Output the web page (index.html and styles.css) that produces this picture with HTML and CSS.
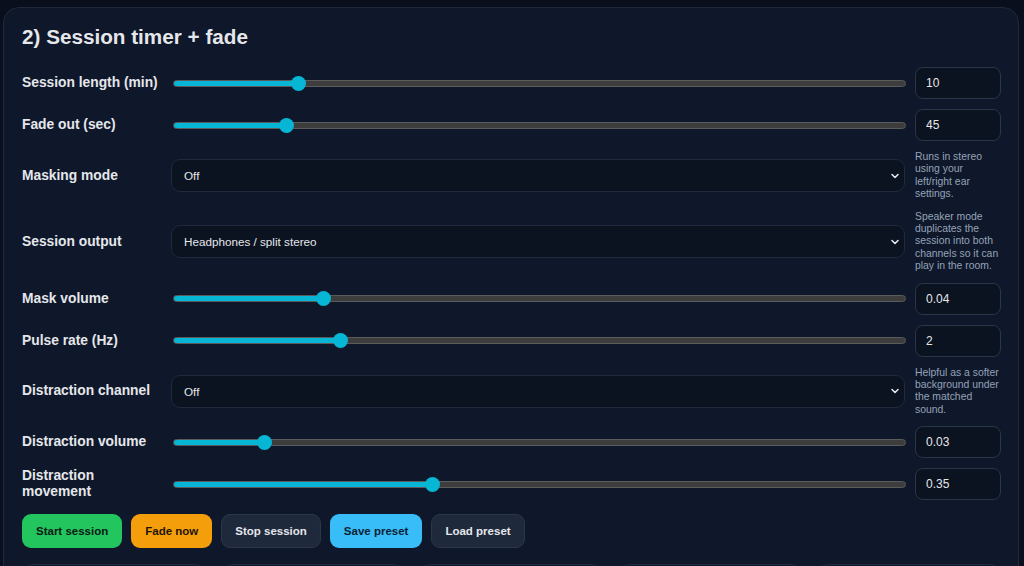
FILE: index.html
```html
<!DOCTYPE html>
<html lang="en">
<head>
<meta charset="utf-8">
<title>Session timer + fade</title>
<link rel="stylesheet" href="styles.css">
</head>
<body>
<div class="page">
  <section class="card">
    <h2 class="card-title">2) Session timer + fade</h2>
    <div class="form-grid">
      <label class="field-label">Session length (min)</label>
      <input class="slider" type="range" min="1" max="56" step="1" value="10" style="--f:0.1636">
      <input class="num" type="text" value="10">

      <label class="field-label">Fade out (sec)</label>
      <input class="slider" type="range" min="1" max="300" step="1" value="45" style="--f:0.1472">
      <input class="num" type="text" value="45">

      <label class="field-label">Masking mode</label>
      <select class="select"><option>Off</option></select>
      <p class="help">Runs in stereo using your left/right ear settings.</p>

      <label class="field-label">Session output</label>
      <select class="select"><option>Headphones / split stereo</option></select>
      <p class="help">Speaker mode duplicates the session into both channels so it can play in the room.</p>

      <label class="field-label">Mask volume</label>
      <input class="slider" type="range" min="0" max="0.202" step="0.001" value="0.04" style="--f:0.198">
      <input class="num" type="text" value="0.04">

      <label class="field-label">Pulse rate (Hz)</label>
      <input class="slider" type="range" min="0" max="9" step="0.1" value="2" style="--f:0.2222">
      <input class="num" type="text" value="2">

      <label class="field-label">Distraction channel</label>
      <select class="select"><option>Off</option></select>
      <p class="help">Helpful as a softer background under the matched sound.</p>

      <label class="field-label">Distraction volume</label>
      <input class="slider" type="range" min="0" max="0.26" step="0.01" value="0.03" style="--f:0.1154">
      <input class="num" type="text" value="0.03">

      <label class="field-label">Distraction movement</label>
      <input class="slider" type="range" min="0" max="1" step="0.01" value="0.35" style="--f:0.35">
      <input class="num" type="text" value="0.35">
    </div>

    <div class="actions">
      <button class="btn btn-green">Start session</button>
      <button class="btn btn-amber">Fade now</button>
      <button class="btn btn-dark">Stop session</button>
      <button class="btn btn-sky">Save preset</button>
      <button class="btn btn-dark">Load preset</button>
    </div>

    <div class="tiles">
      <div class="tile"></div>
      <div class="tile"></div>
      <div class="tile"></div>
      <div class="tile"></div>
      <div class="tile"></div>
    </div>
  </section>
</div>
</body>
</html>
```

FILE: styles.css
```css
html, body {
  margin: 0;
  padding: 0;
  background: #0a0f1d;
  color-scheme: dark;
}

body {
  font-family: "Liberation Sans", Arial, sans-serif;
  color: #e5e7eb;
}

.page {
  padding: 7px 5px 0 3px;
}

.card {
  background: #0f172a;
  border: 1px solid #1e293b;
  border-radius: 16px;
  padding: 17px 17px 20px 18px;
}

.card-title {
  margin: 0 0 18px 0;
  font-size: 20.7px;
  line-height: 24px;
  font-weight: 700;
  color: #e5e7eb;
}

.form-grid {
  display: grid;
  grid-template-columns: 139px 1fr 86px;
  column-gap: 10px;
  row-gap: 10px;
  align-items: center;
}

.field-label {
  font-size: 13.8px;
  line-height: 16px;
  font-weight: 700;
  color: #e5e7eb;
}

.slider {
  -webkit-appearance: none;
  appearance: none;
  height: 16px;
  margin: 0 0 0 2px;
  width: calc(100% - 1px);
  background: transparent;
  outline: none;
}

.slider::-webkit-slider-runnable-track {
  box-sizing: border-box;
  height: 7px;
  border-radius: 4px;
  border: 1px solid #5b5b5b;
  background: linear-gradient(to right, #06b6d4 0, #06b6d4 calc(8px + (100% - 16px) * var(--f)), #3d3d3d calc(8px + (100% - 16px) * var(--f)), #3d3d3d 100%);
}

.slider::-webkit-slider-thumb {
  -webkit-appearance: none;
  appearance: none;
  width: 15px;
  height: 15px;
  border-radius: 50%;
  background: #06b6d4;
  border: none;
  margin-top: -5px;
}

.num {
  box-sizing: border-box;
  height: 32px;
  width: 86px;
  margin: 0;
  padding: 0 10px;
  background: #0b1220;
  border: 1px solid #2a3547;
  border-radius: 8px;
  color: #e5e7eb;
  font-family: "Liberation Sans", Arial, sans-serif;
  font-size: 12px;
  outline: none;
}

.select {
  box-sizing: border-box;
  height: 33px;
  width: 100%;
  margin: 0;
  padding: 0 28px 0 12px;
  background-color: #0b1220;
  background-image: url("data:image/svg+xml,%3Csvg xmlns='http://www.w3.org/2000/svg' width='10' height='10' viewBox='0 0 10 10'%3E%3Cpath d='M2 3.5 L5 6.5 L8 3.5' fill='none' stroke='%23e5e7eb' stroke-width='1.6' stroke-linecap='round' stroke-linejoin='round'/%3E%3C/svg%3E");
  background-repeat: no-repeat;
  background-position: right 4px center;
  border: 1px solid #1f2a3c;
  border-radius: 9px;
  color: #e5e7eb;
  font-family: "Liberation Sans", Arial, sans-serif;
  font-size: 11.7px;
  appearance: none;
  -webkit-appearance: none;
  outline: none;
}

.help {
  margin: 0;
  font-size: 10.4px;
  line-height: 12.4px;
  color: #94a3b8;
}

.actions {
  display: flex;
  gap: 9px;
  margin-top: 14px;
}

.btn {
  box-sizing: border-box;
  height: 34px;
  padding: 0 13px;
  border-radius: 9px;
  border: 1px solid transparent;
  font-family: "Liberation Sans", Arial, sans-serif;
  font-size: 11.5px;
  font-weight: 700;
  cursor: pointer;
}

.btn-green {
  background: #22c55e;
  color: #0b1a14;
}

.btn-amber {
  background: #f59e0b;
  color: #1f1406;
}

.btn-sky {
  background: #38bdf8;
  color: #0b1f33;
}

.btn-dark {
  background: #1e293b;
  border-color: #2b3648;
  color: #e5e7eb;
}

.tiles {
  display: grid;
  grid-template-columns: repeat(5, 1fr);
  gap: 14px;
  margin-top: 16px;
}

.tile {
  height: 70px;
  border: 1px solid #1f2a3c;
  border-radius: 12px;
  background: #0f172a;
}
```
